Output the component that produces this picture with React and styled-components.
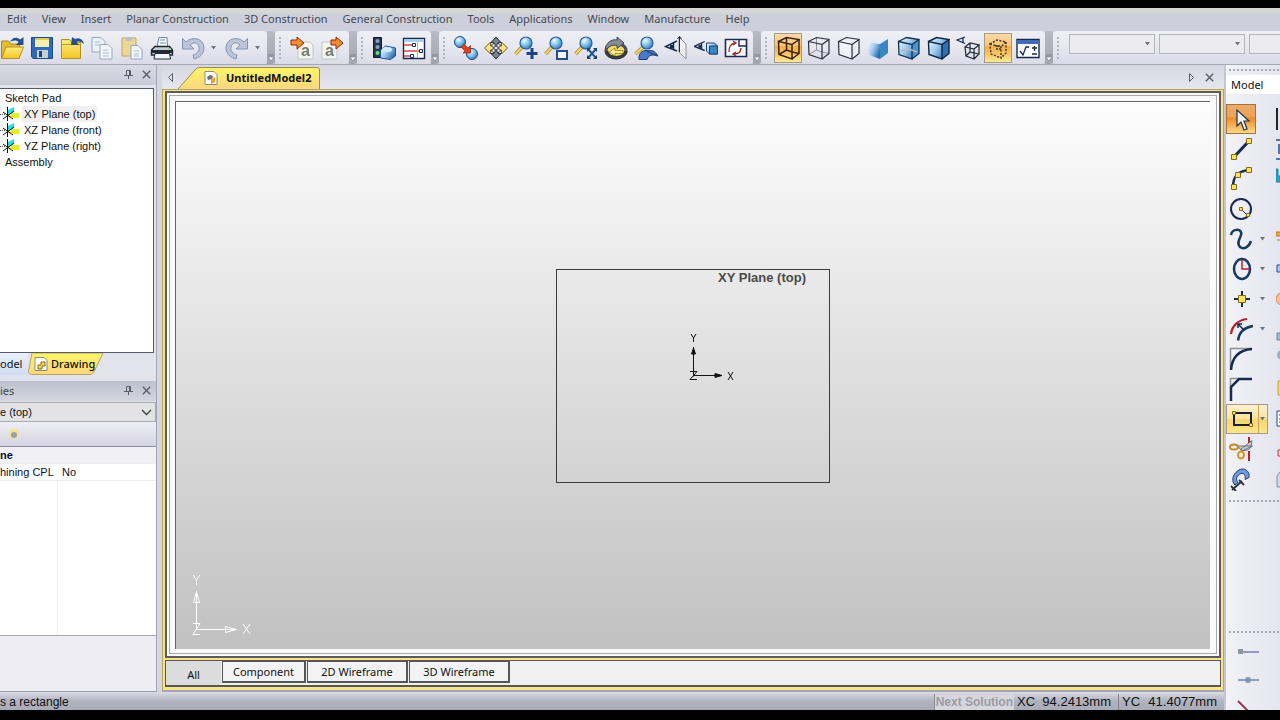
import React from "react";
import styled, { createGlobalStyle } from "styled-components";

const ui = `"Noto Sans", "Open Sans", sans-serif`;
const classic = `"Liberation Sans", Arial, sans-serif`;

const GlobalStyle = createGlobalStyle`
  * {
    box-sizing: border-box;
  }
  body {
    margin: 0;
    background: #000;
    color: #111;
    font: 11px/16px ${ui};
  }
  button,
  select {
    margin: 0;
    padding: 0;
    border: 0;
    background: none;
    color: inherit;
    font: inherit;
  }
  svg {
    display: block;
    flex: none;
  }
`;

const Screen = styled.div`
  display: flex;
  flex-direction: column;
  height: 100vh;
  padding: 8px 0 10px;
  overflow: hidden;
`;

const MenuBar = styled.nav`
  display: flex;
  flex: none;
  gap: 15px;
  height: 23px;
  padding: 0 7px 2px;
  align-items: center;
  background: linear-gradient(#d6d6d8 0 5px, #cdd0da 6px);
`;

const MenuItem = styled.button`
  color: #454850;
  white-space: nowrap;
`;

const ToolBars = styled.div`
  display: flex;
  flex: none;
  height: 34px;
  margin-left: -3px;
  background: #cdd0da;
  border-bottom: 1px solid #a6a8b2;
`;

const BarBody = styled.div`
  display: flex;
  flex: ${({ $fill }) => ($fill ? 1 : "none")};
  align-items: center;
  padding-right: 2px;
  background: linear-gradient(#eff0f6, #e6e7ef 50%, #dadbe6);
  border-radius: 4px;
`;

const BarEnd = styled.button`
  display: flex;
  width: 10px;
  align-items: flex-end;
  justify-content: center;
  padding-bottom: 2px;
  background: linear-gradient(#b9bbc4, #a2a4ae);
  border-radius: 0 3px 3px 0;
`;

const Grip = styled.span`
  width: 2px;
  height: 22px;
  margin: 0 6px 0 4px;
  background: repeating-linear-gradient(#b0b2bd 0 2px, transparent 2px 4px);
`;

const ToolButton = styled.button`
  display: flex;
  width: ${({ $split }) => ($split ? 42 : 28)}px;
  height: 30px;
  margin: 0 1px;
  align-items: center;
  justify-content: ${({ $split }) => ($split ? "space-between" : "center")};
  padding: 0 ${({ $split }) => ($split ? 2 : 0)}px;
  border: 1px solid ${({ $active }) => ($active ? "#a89a80" : "transparent")};
  background: ${({ $active }) =>
    $active ? "linear-gradient(#fad9ac, #f8c577 40%, #f5ae4c 46%, #f8c463 70%, #fbea98)" : "none"};
`;

const Combo = styled.label`
  display: flex;
  flex: none;
  width: 86px;
  height: 20px;
  margin: 0 0 7px 4px;
  align-items: center;
  border: 1px solid #b4b5bb;
  background: #ececf0;

  select {
    flex: 1;
    min-width: 0;
    appearance: none;
  }
  svg {
    margin-right: 3px;
  }
`;

const Body = styled.div`
  display: flex;
  flex: 1;
  min-height: 0;
  background: #d5d6e0;
`;

const Center = styled.div`
  display: flex;
  flex: 1;
  min-width: 0;
  flex-direction: column;
`;

const Work = styled.div`
  display: flex;
  flex: 1;
  min-height: 0;
`;

const SidePanel = styled.aside`
  display: flex;
  flex: none;
  width: 157px;
  flex-direction: column;
  border-right: 1px solid #a4a6b4;
  border-bottom: 1px solid #9c9dab;
  background: #e3e3ec;
`;

const PanelTitle = styled.header`
  display: flex;
  flex: none;
  height: 20px;
  gap: 9px;
  align-items: center;
  padding: 0 5px 1px 0;
  color: #454850;
  background: ${({ $shaded }) =>
    $shaded ? "linear-gradient(#bcc1cb, #d3d6de)" : "linear-gradient(#d9dbe3, #c9ccd6)"};

  span {
    flex: 1;
  }
  button {
    color: #5b5e68;
  }
`;

const TreeBox = styled.ul`
  flex: none;
  height: 265px;
  margin: 3px 2px 0 0;
  padding: 1px 0 0;
  list-style: none;
  background: #fff;
  border: solid #555a68;
  border-width: 1px 1px 1px 0;
  font: 11px/16px ${classic};
`;

const TreeItem = styled.li`
  display: flex;
  height: 16px;
  gap: 2px;
  padding-left: ${({ $leaf }) => ($leaf ? 0 : 5)}px;

  span {
    padding: 0 2px;
    margin-left: ${({ $leaf }) => ($leaf ? 0 : -2)}px;
    background: ${({ $selected }) => ($selected ? "#f0f0f0" : "none")};
  }
`;

const PanelTabs = styled.div`
  display: flex;
  height: 28px;
  background: linear-gradient(90deg, #dfe2ee, #e3e3ec 60%);
`;

const ModelTab = styled.button`
  align-self: flex-start;
  width: 28px;
  height: 22px;
  text-align: left;
  background: linear-gradient(#eaf1fc, #cfdcf2);
`;

const SlantTab = styled.button`
  display: grid;
  height: 22px;
  align-items: center;

  > * {
    grid-area: 1 / 1;
  }
`;

const TabLabel = styled.span`
  display: flex;
  gap: ${({ $bold }) => ($bold ? 8 : 3)}px;
  align-items: center;
  padding-left: ${({ $bold }) => ($bold ? 26 : 6)}px;
  font-weight: ${({ $bold }) => ($bold ? 700 : 500)};
  z-index: 1;
`;

const ObjectPicker = styled.label`
  display: flex;
  height: 20px;
  margin-top: 1px;
  align-items: center;
  border: solid #a9a9b0;
  border-width: 1px 1px 1px 0;
  background: #e3e3e6;
  font: 11px/16px ${classic};

  select {
    flex: 1;
    appearance: none;
  }
  svg {
    margin-right: 3px;
  }
`;

const PropTools = styled.div`
  display: flex;
  flex: none;
  height: 24px;
  padding-left: 8px;
  align-items: center;
  background: linear-gradient(#eeeef5, #d5d4e0);
`;

const PropTable = styled.table`
  width: 100%;
  border-collapse: collapse;
  border-top: 1px solid #8d8f9c;
  background: #fff;
  color: #0e1033;
  font: 11px/16px ${classic};

  th,
  td {
    height: 17px;
    padding: 0;
    text-align: left;
    font-weight: 400;
    border-bottom: 1px solid #ececf0;
  }
  th[scope="rowgroup"] {
    font-weight: 700;
    background: #efeff4;
  }
  td {
    width: 95px;
    padding-left: 1px;
  }
`;

const PropSpace = styled.div`
  flex: 1;
  background: linear-gradient(90deg, #fff 57px, #f2f2f2 57px 58px, #fff 58px);
`;

const PropHelp = styled.div`
  flex: none;
  height: 56px;
  border-top: 1px solid #a9a6b8;
  background: #ededf3;
`;

const DocArea = styled.main`
  display: flex;
  flex: 1;
  min-width: 0;
  margin-left: 5px;
  flex-direction: column;
`;

const DocTabs = styled.div`
  display: flex;
  flex: none;
  height: 24px;
  padding: 2px 6px 0 4px;
  color: #5b5e68;
  background: linear-gradient(#d6d7e0, #e6e6ee);
`;

const TabSpace = styled.span`
  flex: 1;
`;

const NavButton = styled.button`
  display: flex;
  width: 18px;
  height: 20px;
  align-items: center;
  justify-content: ${({ $left }) => ($left ? "flex-start" : "center")};
  color: #5b5e68;
`;

const DocTab = styled(SlantTab)`
  margin-left: -6px;
  color: #111;
`;

const YellowFrame = styled.section`
  display: flex;
  flex: 1;
  min-height: 0;
  flex-direction: column;
  padding: 1px 2px 3px;
  border: 1px solid #b5a565;
  border-width: 1px 1px 2px;
  border-bottom-color: #a6a4ae;
  background: #f8e488;
`;

const ViewFrame = styled.div`
  display: flex;
  flex: 1;
  min-height: 0;
  padding: 2px;
  border: 2px solid #5c5c60;
  background: #fafafa;
`;

const ViewInset = styled.div`
  display: flex;
  flex: 1;
  padding: 5px 6px 4px 5px;
  border: 1px solid #a9a9ac;
  background: #fafafa;
`;

const Viewport = styled.div`
  position: relative;
  display: grid;
  flex: 1;
  place-items: center;
  border: 1px solid #66666a;
  border-width: 1px 0 0 1px;
  background: linear-gradient(#fdfdfd, #dedede 50%, #c1c1c1);
`;

const Plane = styled.div`
  display: grid;
  width: 274px;
  height: 214px;
  border: 1px solid #3c3c3c;

  > * {
    grid-area: 1 / 1;
  }
`;

const PlaneLabel = styled.span`
  justify-self: end;
  padding-right: 23px;
  color: #4a4a4a;
  font: 700 13px/16px ${classic};
`;

// the origin of the axes sits in the middle of the plane
const PlaneAxes = styled.div`
  display: grid;
  padding: 0 0 37px 41px;
  place-items: center;
`;

const CornerAxes = styled.div`
  position: absolute;
  left: 15px;
  bottom: 9px;
`;

const SheetTabs = styled.div`
  display: flex;
  flex: none;
  height: 27px;
  margin-top: 2px;
  border: solid #55555a;
  border-width: 1px 1px 2px;
  background: #f0f0f0;
`;

const SheetTab = styled.button`
  width: ${({ $width }) => $width}px;
  height: ${({ $active }) => ($active ? 24 : 22)}px;
  margin-right: 1px;
  padding-top: ${({ $active }) => ($active ? 3 : 0)}px;
  border: solid #55555a;
  border-width: ${({ $active }) => ($active ? "0" : "1px 2px 2px 1px")};
  background: ${({ $active }) => ($active ? "#dcdcdc" : "#f3f3f3")};
`;

const StatusBar = styled.footer`
  display: flex;
  flex: none;
  height: 18px;
  align-items: center;
  padding-top: 2px;
  background: linear-gradient(#dcdce4, #b0b2be 50%, #a9acb8);
  font: 12px/16px ${classic};
`;

const Hint = styled.span`
  flex: 1;
`;

const NextSolution = styled.button`
  height: 16px;
  padding: 0 1px;
  border-left: 1px solid #888a96;
  background: #d6d6dc;
  color: #9b9ca4;
  font-weight: 700;
`;

const Coord = styled.output`
  display: flex;
  width: ${({ $width }) => $width}px;
  justify-content: space-between;
  padding: 0 7px 0 3px;
  font-size: 13px;
  border-right: ${({ $last }) => ($last ? "0" : "1px solid #80828e")};
`;

const Palette = styled.aside`
  display: flex;
  flex: none;
  width: 56px;
  flex-direction: column;
  overflow: hidden;
  border-left: 2px solid #c5c6d0;
  background: linear-gradient(90deg, #f1f1f7, #e5e5ef);
`;

const Dots = styled.div`
  flex: none;
  height: 2px;
  margin: ${({ $gap }) => $gap} 0 0 3px;
  background: repeating-linear-gradient(90deg, #a6a8b2 0 2px, transparent 2px 4px);
`;

const PaletteTitle = styled.h2`
  flex: none;
  height: 19px;
  margin: 4px 0 10px;
  padding: 2px 5px 1px;
  background: #fff;
  font: inherit;
`;

const PaletteRow = styled.div`
  display: grid;
  grid-template-columns: 42px 1fr;
  flex: none;
  height: 30px;
`;

const PaletteButton = styled.button`
  display: flex;
  width: ${({ $active }) => ($active ? 30 : 42)}px;
  height: 30px;
  align-items: center;
  gap: 6px;
  padding-left: 2px;
  border: 1px solid ${({ $active, $open }) => ($active ? "#a8713c" : $open ? "#a89a80" : "transparent")};
  background: ${({ $active, $open }) =>
    $active
      ? "linear-gradient(#e8ab6c, #eda458 40%, #ef8d2c 48%, #f8b458 75%, #fbd98a)"
      : $open
      ? "linear-gradient(90deg, transparent 31px, #c9a455 31px 32px, transparent 32px), linear-gradient(#fbf0d2, #fbe3a0 48%, #f8d66e 52%, #fbe68e)"
      : "none"};
`;

const PaletteClip = styled.span`
  padding: 3px 0 0 8px;
`;

const PaletteFill = styled.div`
  flex: 1;
`;

const SnapList = styled.div`
  display: flex;
  flex: none;
  flex-direction: column;
  height: 77px;
  gap: 4px;
  padding: 7px 0 0 9px;
  overflow: hidden;
`;

const navy = "#182a50";

const Icon = ({ children, size = 24, ...rest }) => (
  <svg width={size} height={size} viewBox={`0 0 ${size} ${size}`} fill="none" aria-hidden="true" {...rest}>
    {children}
  </svg>
);

const Caret = ({ color = "#70737d" }) => (
  <svg width="7" height="4" viewBox="0 0 7 4" aria-hidden="true">
    <path d="M1 0h5L3.500 3.500z" fill={color} />
  </svg>
);

const EndMark = () => (
  <svg width="8" height="8" viewBox="0 0 8 8" aria-hidden="true">
    <path d="M1 1h6M1 3h6L4 7z" fill="#fff" stroke="#666874" strokeWidth=".6" />
  </svg>
);

const Pin = () => (
  <Icon size={9} stroke="#5b5e68">
    <path d="M2.500 5V.5h4V5M5.500 1v4M0 5.500h9M4.500 6v3" />
  </Icon>
);

const Cross = () => (
  <Icon size={9} stroke="#5b5e68" strokeWidth="1.400">
    <path d="m.8.800 7.400 7.400m0-7.400L.8 8.200" />
  </Icon>
);

const Chevron = () => (
  <svg width="11" height="7" viewBox="0 0 11 7" fill="none" stroke="#3c3e45" strokeWidth="1.300">
    <path d="m1 1 4.500 4.500L10 1" />
  </svg>
);

const Lens = ({ x = 14, y = 8, r = 6 }) => (
  <>
    <path d={`M${x - 4} ${y + 4}L1.500 ${y + 11}`} stroke="#a8802c" strokeWidth="3.500" />
    <path d={`M${x - 4} ${y + 4}L1.500 ${y + 11}`} stroke="#f5d865" strokeWidth="2" />
    <circle cx={x} cy={y} r={r} fill="url(#ball)" stroke="#286094" strokeWidth="1.200" />
  </>
);

const cubeEdges = "M2.500 5.500 16 8.500V23L3 18.500zM2.500 5.500l8-4 12.500 2-7 5M23 3.500v14L16 23";
const cubeHidden = "M10.500 1.500V14L16 16l7 1.500M10.500 14 3 18.500";
const cubeSolid = "M2.500 5.500l8-4 12.500 2v14L16 23 3 18.500z";

const Pages = () => (
  <>
    <path d="M2 1.500h9l4 4V16H2z" fill="#edf1f6" stroke="#99a7bd" />
    <path d="M10 8.500h8l4 4V23H10z" fill="#f3f5fa" stroke="#99a7bd" />
    <path d="M5 6h5M5 9h5M13 14h5M13 17h6M13 20h6" stroke="#a8bcd8" />
  </>
);

const UndoShape = () => (
  <path
    d="M1.500 2.500 5 6C11 0 22 2 23 11c.5 7-5 11-10 12l-1-4c4-1 7-4 6-8-1-5-6-5-9-2l4 4H1.500z"
    fill="#bcc5d8"
    stroke="#8494b4"
  />
);

const Sheet = ({ x }) => (
  <>
    <path d={`M${x} 6h12l3 3v14h-15z`} fill="#f4f4f0" stroke="#c4c4c4" />
    <text x={x + 3} y="20" fill="#75806c" fontSize="16" fontWeight="700" fontFamily="Liberation Sans">
      a
    </text>
  </>
);

const Eye = () => (
  <>
    <path d="M13 5 1.500 10.500 13 15M9.500 7v7" stroke={navy} strokeWidth="1.500" />
    <path d="M6 9h3v3H6z" fill={navy} />
  </>
);

const icons = {
  open: (
    <>
      <path d="M1.500 5h7l2 3h9v14h-18z" fill="#e8bd2c" stroke="#a8851e" />
      <path d="M1.500 22.500 6 11h17.500L19 22.500z" fill="url(#gold)" stroke="#b5901c" />
      <path d="M10 7c1-5 6-7 10-3.500L23.500 1v8H16l2.500-3C16 4 12 4 10 7z" fill="#25508e" />
    </>
  ),
  save: (
    <>
      <path d="M1.500 1.500h21v21H3l-1.500-2z" fill="#2d6ab8" stroke="#1c4b8c" />
      <path d="M5 2h14v9H5z" fill="#f5efb0" />
      <path d="M5 2h14v2H5z" fill="#e0ca5e" />
      <path d="M7 14h11v8H7z" fill="#c6ced8" />
      <path d="M9 15h3v6H9z" fill="#27406c" />
    </>
  ),
  import: (
    <>
      <path d="M1.500 3.500h8l2 3h9v16h-19z" fill="url(#gold)" stroke="#b5901c" />
      <path d="M2 8.500h18" stroke="#c69d1e" />
      <path d="M24 8c-1-5-5-7-9-5l-3-2-1 8h8l-2.500-3c3-1 5 0 7.500 2z" fill="#25508e" />
    </>
  ),
  copy: <Pages />,
  paste: (
    <>
      <path d="M2 2h14v18H2z" fill="#ecd797" stroke="#c2a55e" />
      <path d="M6 1h6v4H6z" fill="#b9bfca" />
      <path d="M11 9.500h7l4 4V23H11z" fill="#f2f5fa" stroke="#92a5c4" />
      <path d="M14 15h5M14 18h5M14 20h5" stroke="#a8bcd8" />
    </>
  ),
  print: (
    <>
      <path d="M7 11 9 1.500h8L17.500 11z" fill="#f8fafc" stroke="#6b85ac" />
      <path d="M10 4h5M10 7h6" stroke="#7b8fae" />
      <path d="M1.500 14 5 10.500h14.500l3 3.500v5h-21z" fill="#c6ced8" stroke="#1c2733" strokeWidth="1.400" />
      <path d="M2 14h20v3H2z" fill="#202a33" />
      <path d="M5 17.500h14.500l1 5.500H4z" fill="#f3f6f8" stroke="#202a33" />
      <path d="M18 12h3v1h-3z" fill="#6dda79" />
    </>
  ),
  undo: <UndoShape />,
  redo: (
    <g transform="matrix(-1 0 0 1 24 0)">
      <UndoShape />
    </g>
  ),
  readIn: (
    <>
      <Sheet x={8} />
      <path d="M1 4h6V1l7 6-7 6v-4H1z" fill="#f48a32" stroke="#8c2c10" />
    </>
  ),
  readOut: (
    <>
      <Sheet x={2} />
      <path d="M11 4h5V1l7 6-7 6v-4h-5z" fill="#f48a32" stroke="#8c2c10" />
    </>
  ),
  signal: (
    <>
      <path d="M1.500 1.500h8v20h-8z" fill="#26384c" stroke="#101a28" />
      <circle cx="5.500" cy="5" r="2" fill="#8aa3b4" />
      <circle cx="5.500" cy="11" r="2" fill="#8aa3b4" />
      <circle cx="5.500" cy="17" r="2" fill="#6fe06c" />
      <path d="m8.500 14 5-4 10 2v8l-5 3.500-10-1.500z" fill="url(#blue)" stroke="#1f5590" />
      <ellipse cx="15" cy="13.500" rx="5" ry="2.500" fill="#d3ebfa" />
    </>
  ),
  sliders: (
    <>
      <path d="M1.500 2.500h21v20h-21z" fill="#fff" stroke={navy} strokeWidth="1.400" />
      <path d="M2 3h20v3H2z" fill="#a9cdec" />
      <path d="M2 9h9M2 15h17M2 20h8" stroke="#d04a4a" strokeWidth="1.500" />
      <path d="M15.500 6v16" stroke="#8fb8dc" />
      <path d="M10.500 7.500h3v3h-3zM17.500 13.500h3v3h-3zM8.500 18.500h3v3h-3z" fill="#fff" stroke={navy} />
    </>
  ),
  balls: (
    <>
      <circle cx="6" cy="6" r="5.500" fill="url(#ball)" stroke="#1d4a80" />
      <circle cx="18" cy="18" r="5.500" fill="url(#ball)" stroke="#1d4a80" />
      <path d="m7 11 3-3 4 4 2.500-2.500V17H9l2-2z" fill="#e6401f" stroke="#8c2412" strokeWidth=".7" />
    </>
  ),
  pan: (
    <>
      <path d="m12 1 5 5.500h-3V10h-4V6.500H7zM12 23l5-5.500h-3V14h-4v3.500H7z" fill="#7b8391" stroke="#2b3342" />
      <path d="m.5 12 6-6v4H10v4H6.500v4zM23.500 12l-6-6v4H14v4h3.500v4z" fill="#f9e67c" stroke="#6d5a1c" />
      <path d="M8 8h3v3H8zM13 8h3v3h-3zM8 13h3v3H8zM13 13h3v3h-3z" fill="#fff" stroke="#2b3342" strokeWidth=".8" />
    </>
  ),
  zoomIn: (
    <>
      <Lens x={12} y={7} />
      <path d="M18 12v11M12.500 17.500h11" stroke="#1f3f86" strokeWidth="3" />
    </>
  ),
  zoomBox: (
    <>
      <Lens x={12} y={7} />
      <path d="M13 15h10v8H13z" fill="#f4f7fc" stroke="#264a8c" strokeWidth="2" />
    </>
  ),
  zoomAll: (
    <>
      <Lens x={12} y={7} />
      <path d="m14 13 8 9m0-9-8 9" stroke="#27568f" strokeWidth="2" />
      <path d="M13 12h4l-4 4zM23 12h-4l4 4zM13 23h4l-4-4zM23 23h-4l4-4z" fill="#1d4272" />
    </>
  ),
  rotate: (
    <>
      <ellipse cx="12" cy="14.500" rx="10" ry="7" fill="#f4dc62" stroke="#4a4f58" strokeWidth="3" />
      <path d="M2.500 15c1 9 18 9 19.500 0" stroke="#33373e" strokeWidth="3.500" />
      <path d="M1.500 11C4 5 9 3 13 4V1l7 6-7 5.500v-3c-4-1-8 0-10.500 4z" fill="#868b9a" stroke="#434853" />
      <path d="m5 16 6-4v2.500h8v3h-8V20z" fill="#fbeb90" stroke="#9c7c1c" strokeWidth=".8" />
    </>
  ),
  zoomBack: (
    <>
      <Lens x={13} y={7} />
      <path d="M5 23.500C4 15 12 12 18 16.500l-1-1L23.500 20C18 18 15 19 13 23.500z" fill="#4a78c2" stroke="#1d3d78" />
      <path d="M13 15.500c4-2 8-1 10.500 4L17 17z" fill="#4a78c2" stroke="#1d3d78" />
    </>
  ),
  viewPlane: (
    <>
      <Eye />
      <path d="M15 1v15l7 7V8z" fill="#f1f2f7" stroke="#8b929e" />
      <path d="M15.500 1v15" stroke={navy} />
      <path d="m13.500 3 2-2.500 2 2.500" stroke={navy} />
    </>
  ),
  viewFace: (
    <>
      <g transform="translate(-1 1) scale(.9)">
        <Eye />
      </g>
      <path d="M12.500 7h8l3 3v8h-8l-3-3z" fill="url(#blue)" stroke="#1c4474" />
      <path d="M15.500 10h8v8h-8z" fill="#3b82c0" stroke="#1c4474" />
    </>
  ),
  swap: (
    <>
      <path d="M1.500 3.500h21v17h-21z" fill="#fff" stroke={navy} strokeWidth="1.600" />
      <path d="M15 4v6h7" stroke={navy} strokeWidth="1.400" />
      <path d="M5 16c0-5 1-8 6-9m-2-2 3 2-3 2M17 12c0 4-2 6-7 6m2-2-3 2 3 2" stroke="#a02630" strokeWidth="1.400" />
    </>
  ),
  wire: <path d={cubeEdges + cubeHidden} stroke="#3b2410" strokeWidth="1.500" />,
  hiddenGrey: (
    <>
      <path d={cubeHidden} stroke="#8d919b" />
      <path d={cubeEdges} stroke="#2b303c" strokeWidth="1.200" />
    </>
  ),
  hiddenOff: <path d={cubeEdges} stroke="#2b303c" strokeWidth="1.200" fill="#f1f2f7" />,
  shaded: (
    <>
      <path d="M2 6 14 8v15L3 19z" fill="url(#blue)" />
      <path d="m2 6 7-4 13 1-8 5z" fill="#e3eef8" />
      <path d="M22 3v14l-8 6V8z" fill="#3787c4" />
    </>
  ),
  shadedGrey: (
    <>
      <path d={cubeSolid} fill="url(#blue)" />
      <path d="M23 3.500v14L16 23V8.500z" fill="#4a93d0" />
      <path d={cubeEdges} stroke="#14314e" strokeWidth="1.300" />
      <path d="M5 15c5-3 9-2 16 1" stroke="#b4b9c2" strokeWidth="1.500" />
    </>
  ),
  shadedEdges: (
    <>
      <path d={cubeSolid} fill="url(#blue)" />
      <path d="M23 3.500v14L16 23V8.500z" fill="#2f6fb2" />
      <path d={cubeEdges} stroke="#0e2440" strokeWidth="1.400" />
    </>
  ),
  perspective: (
    <>
      <path d="M9 1 1 4l8 3.500M7 2v5" stroke={navy} strokeWidth="1.300" />
      <path d="m9 11 9 2v10l-8-3zM9 11l5-4 9 2-5 4M23 9v9l-5 5M14 7v9l9 2M14 16l-4 4" stroke="#222936" strokeWidth="1.200" />
    </>
  ),
  dashed: (
    <>
      <path d="m4 8 11 3v11L5 18zM4 8l7-4 9 2-5 5M20 6v11l-5 5" stroke="#4b3a18" strokeWidth="1.500" strokeDasharray="2 1.500" />
      <path d="M9 10h6M10 13h5" stroke="#333b40" strokeWidth="1.500" strokeDasharray="2 1" />
    </>
  ),
  options: (
    <>
      <path d="M1 3.500h22v18H1z" fill="#fff" stroke={navy} strokeWidth="1.400" />
      <path d="M2 4h20v4H2z" fill="#3e6db5" />
      <path d="m4 15 3 4 3-8h3M16 12h5M18.500 10v5M16 18h5" stroke={navy} strokeWidth="1.300" />
    </>
  ),
};

const node = { fill: "#f9e55e", stroke: "#84691b" };

const palette = [
  {
    name: "Select",
    active: true,
    icon: <path d="M8 3v16l4-4 3 8 3-1-3-8h5z" fill="#e9f5fb" stroke="#223140" strokeWidth="1.200" />,
    clip: <path d="M1 1v22" stroke="#222" strokeWidth="2" />,
  },
  {
    name: "Line",
    icon: (
      <>
        <path d="M5 20 20 4" stroke={navy} strokeWidth="3" />
        <path d="M2.500 17.500h5v5h-5zM17.500 1.500h5v5h-5z" {...node} />
      </>
    ),
    clip: <path d="M0 3h5M3 7v10M0 22h5" stroke="#27508a" strokeWidth="1.500" />,
  },
  {
    name: "Arc",
    icon: (
      <>
        <path d="M4 20c0-11 5-16 16-17" stroke={navy} strokeWidth="2.500" />
        <path d="M2.500 17.500h5v5h-5zM6.500 5.500h5v5h-5zM17.500.5h5v5h-5z" {...node} />
      </>
    ),
    clip: <path d="M0 2v13h5V9H2V2z" fill="#22a4c8" stroke="#2a7fae" />,
  },
  {
    name: "Circle",
    icon: (
      <>
        <circle cx="12" cy="12" r="10" stroke={navy} strokeWidth="2" />
        <path d="m12 12 7 7" stroke={navy} />
        <path d="M10.500 10.500h3v3h-3zM17.500 16.500h3v3h-3z" {...node} />
      </>
    ),
  },
  {
    name: "Curve",
    menu: true,
    icon: <path d="M2 8c1-7 12-7 10 0-1 4-5 8-1 12 4 3 9 0 11-6" stroke="#173b5c" strokeWidth="2.500" />,
    clip: <path d="M0 5h5v4H0zM1 13h4" fill="#e6a94a" stroke="#c07b22" />,
  },
  {
    name: "Ellipse",
    menu: true,
    icon: (
      <>
        <ellipse cx="13" cy="12" rx="8" ry="10" stroke="#173b5c" strokeWidth="2.500" />
        <path d="M13 3v9h7" stroke="#bb2430" strokeWidth="1.500" />
      </>
    ),
    clip: <path d="M1 8h6v7H1z" fill="#a9c8f0" stroke="#2a4f9a" />,
  },
  {
    name: "Point",
    menu: true,
    icon: (
      <>
        <path d="M13 4v16M5 12h16" stroke={navy} strokeWidth="2" />
        <path d="M9.500 8.500h7v7h-7z" {...node} />
      </>
    ),
    clip: <circle cx="6" cy="12" r="6" fill="#f5bf9c" stroke="#d28254" />,
  },
  {
    name: "Offset",
    menu: true,
    icon: (
      <>
        <path d="M2 17C3 9 9 3 18 2" stroke="#b5222d" strokeWidth="2.200" />
        <path d="M9 23.500c1-8 6-13 15-14.500" stroke="#173b5c" strokeWidth="2.500" />
        <path d="m15 13-6-6m0 4V7h4" stroke={navy} strokeWidth="1.500" />
      </>
    ),
    clip: <path d="M1 16h5v7H1z" fill="#a4b5cf" stroke="#7285a7" />,
  },
  {
    name: "Fillet",
    icon: (
      <>
        <path d="M1.500 22V1.500H23" stroke="#8a9096" strokeWidth="1.500" />
        <path d="M2 23C3 10 10 3 23 2" stroke={navy} strokeWidth="2.500" />
      </>
    ),
    clip: <circle cx="6" cy="8" r="5" fill="#9cadc8" />,
  },
  {
    name: "Chamfer",
    icon: (
      <>
        <path d="M1.500 10V1.500H10" stroke="#8a9096" strokeWidth="1.500" />
        <path d="M2 24V10l8-8h13" stroke={navy} strokeWidth="2.500" />
      </>
    ),
    clip: <path d="M2 4h6v14H2z" fill="#f4d964" stroke="#cba63a" />,
  },
  {
    name: "Rectangle",
    menu: true,
    open: true,
    icon: (
      <>
        <path d="M5 6h17v12H5z" stroke="#1a1f2a" strokeWidth="2" />
        <path d="M3.500 4.500h3v3h-3zM20.500 16.500h3v3h-3z" {...node} />
      </>
    ),
    clip: <path d="M1 4h6v15H1zM3 8h4M3 12h4M3 15h4" fill="#fff" stroke="#25477c" />,
  },
  {
    name: "Trim",
    icon: (
      <>
        <path d="M20 0v6M20 14v10" stroke="#b8202b" strokeWidth="2" />
        <path d="m12 12 11-8.500-1 6-9 4.500zM9 9l14.500 0-5 4-6 1z" fill="#c6cad4" stroke="#6f7583" />
        <ellipse cx="5" cy="10" rx="4" ry="2.500" stroke="#c38a20" strokeWidth="2" />
        <ellipse cx="12" cy="18" rx="3" ry="3.500" stroke="#d99526" strokeWidth="2" />
      </>
    ),
    clip: <path d="M2 13h5v6H2z" stroke="#c3322c" />,
  },
  {
    name: "Clamp",
    icon: (
      <>
        <path
          d="M6 18C1 13 5 5 11 2.500c5-2 10 2 9 8l-4 2c1-4-1-7-4-6-4 1.500-6 6-3 9z"
          fill="#6f9add"
          stroke="#1d3d78"
        />
        <path d="m3 23 10-9M2 19l5 5M10 13l5 5" stroke="#2b3342" strokeWidth="1.800" />
      </>
    ),
    clip: <path d="M1 20V9l3-4h4v15z" fill="#cfd9ec" stroke="#8693ae" />,
  },
];

const toolGroups = [
  { tools: ["open", "save", "import", "copy", "paste", "print", "undo", "redo"], split: ["undo", "redo"] },
  { tools: ["readIn", "readOut"] },
  { tools: ["signal", "sliders"] },
  {
    tools: ["balls", "pan", "zoomIn", "zoomBox", "zoomAll", "rotate", "zoomBack", "viewPlane", "viewFace", "swap"],
  },
  {
    tools: ["wire", "hiddenGrey", "hiddenOff", "shaded", "shadedGrey", "shadedEdges", "perspective", "dashed", "options"],
    active: ["wire", "dashed"],
  },
];

const menus = [
  "Edit",
  "View",
  "Insert",
  "Planar Construction",
  "3D Construction",
  "General Construction",
  "Tools",
  "Applications",
  "Window",
  "Manufacture",
  "Help",
];

const tree = [
  { label: "Sketch Pad" },
  { label: "XY Plane (top)", leaf: true, selected: true },
  { label: "XZ Plane (front)", leaf: true },
  { label: "YZ Plane (right)", leaf: true },
  { label: "Assembly" },
];

const sheets = [
  { label: "All", width: 55, active: true },
  { label: "Component", width: 84 },
  { label: "2D Wireframe", width: 101 },
  { label: "3D Wireframe", width: 101 },
];

const Gradients = () => (
  <svg width="0" height="0" aria-hidden="true">
    <defs>
      <radialGradient id="ball" cx=".35" cy=".3" r=".8">
        <stop offset="0" stopColor="#f2fbff" />
        <stop offset=".5" stopColor="#7fc0ea" />
        <stop offset="1" stopColor="#2670b0" />
      </radialGradient>
      <linearGradient id="blue" x2="1" y2=".6">
        <stop offset="0" stopColor="#f0f8fd" />
        <stop offset=".5" stopColor="#a0cbee" />
        <stop offset="1" stopColor="#2b6cae" />
      </linearGradient>
      <linearGradient id="gold" x2="0" y2="1">
        <stop offset="0" stopColor="#fff07e" />
        <stop offset="1" stopColor="#f3c522" />
      </linearGradient>
      <linearGradient id="tab" x2="0" y2="1">
        <stop offset="0" stopColor="#fdf568" />
        <stop offset="1" stopColor="#fad77e" />
      </linearGradient>
    </defs>
  </svg>
);

const PlaneIcon = () => (
  <svg width="20" height="16" viewBox="0 0 20 16" fill="none" aria-hidden="true">
    <path d="M8 4l6-3v5l-6 4z" fill="#1fe0e6" />
    <path d="m9 10 4-3h6v5h-6z" fill="#e6f01c" />
    <path d="M7.500 1v14M3 6l10 7M3 13l11-8" stroke="#111" />
    <path d="M0 8.500h6" stroke="#555" strokeDasharray="1 1" />
  </svg>
);

const TabIcon = ({ drawing }) => (
  <Icon size={14}>
    <path d="M1 .5h9l3 3v10H1z" fill="#fff" stroke="#8b8b80" />
    {drawing ? (
      <path d="M4 12V8h3V5h4v4H8v3z" stroke="#8a6d12" fill="#f5d75c" />
    ) : (
      <>
        <path d="M3 6l3-2 3 1-1 3-4 1z" fill="#6d6f78" />
        <path d="m7 8 4-2v5l-4 2z" fill="#f0a222" />
      </>
    )}
  </Icon>
);

const Axes = ({ color, small }) => (
  <svg width={small ? 52 : 66} height={small ? 50 : 68} fill="none" stroke={color} aria-label="axes">
    {small ? (
      <>
        <path d="M5.500 44.500V15M5.500 43.500H34" />
        <path d="m3.500 22 2-6 2 6zM27 41.500l7 2-7 2z" fill={color} />
        <path d="m3 2 2.500 4L8 2M5.500 6v4M40 40l5 8m0-8-5 8M2 39.500h7l-7 8h7" />
      </>
    ) : (
      <>
        <path d="M5.500 58V20M5.500 57.500H44" />
        <path d="m2.500 30.500 3-11 3 11zM34.500 54.500l11 3-11 3z" />
        <path d="m2 3 3.500 5L9 3M5.500 8v5M52 52l7 10m0-10-7 10M2 51.500h7l-7 11h7" />
      </>
    )}
  </svg>
);

const Toolbar = ({ tools, active = [], split = [], grip }) => (
  <>
    <BarBody>
      {grip && <Grip />}
      {tools.map((name) => (
        <ToolButton
          key={name}
          aria-label={name}
          $active={active.includes(name)}
          $split={split.includes(name)}
        >
          <Icon>{icons[name]}</Icon>
          {split.includes(name) && <Caret />}
        </ToolButton>
      ))}
    </BarBody>
    <BarEnd aria-label="More buttons">
      <EndMark />
    </BarEnd>
  </>
);

const Title = ({ children, shaded }) => (
  <PanelTitle $shaded={shaded}>
    <span>{children}</span>
    <button aria-label="Pin">
      <Pin />
    </button>
    <button aria-label="Close panel">
      <Cross />
    </button>
  </PanelTitle>
);

const LeftPanel = () => (
  <SidePanel>
    <Title />
    <TreeBox>
      {tree.map(({ label, leaf, selected }) => (
        <TreeItem key={label} $leaf={leaf} $selected={selected}>
          {leaf && <PlaneIcon />}
          <span>{label}</span>
        </TreeItem>
      ))}
    </TreeBox>
    <PanelTabs>
      <ModelTab>odel</ModelTab>
      <SlantTab>
        <svg width="76" height="22" viewBox="0 0 76 22">
          <path d="M4 0h71L66 19q-1 2.500-4 2.500H4Q-1 21 1 16z" fill="url(#tab)" stroke="#b9a464" />
        </svg>
        <TabLabel>
          <TabIcon drawing />
          Drawing
        </TabLabel>
      </SlantTab>
    </PanelTabs>
    <Title shaded>ies</Title>
    <ObjectPicker>
      <select aria-label="Object">
        <option>e (top)</option>
      </select>
      <Chevron />
    </ObjectPicker>
    <PropTools>
      <Icon size={12}>
        <circle cx="6" cy="6" r="5" fill="#f4e58c" />
        <circle cx="6" cy="7" r="3" fill="#9b9cb0" />
      </Icon>
    </PropTools>
    <PropTable>
      <tbody>
        <tr>
          <th scope="rowgroup" colSpan="2">
            ne
          </th>
        </tr>
        <tr>
          <th scope="row">hining CPL</th>
          <td>No</td>
        </tr>
      </tbody>
    </PropTable>
    <PropSpace />
    <PropHelp />
  </SidePanel>
);

const Document = () => (
  <DocArea>
    <DocTabs>
      <NavButton $left aria-label="Scroll tabs left">
        <Icon size={9} stroke="#5b5e68">
          <path d="M6.500.5v8l-4-4z" />
        </Icon>
      </NavButton>
      <DocTab>
        <svg width="142" height="22" viewBox="0 0 142 22">
          <path d="M0 22 17 3q2-2.500 5-2.500h117q2.500 0 2.500 2.500v19" fill="url(#tab)" stroke="#a08a52" />
        </svg>
        <TabLabel $bold>
          <TabIcon />
          UntitledModel2
        </TabLabel>
      </DocTab>
      <TabSpace />
      <NavButton aria-label="Scroll tabs right">
        <Icon size={9} stroke="#5b5e68">
          <path d="M2.500.5v8l4-4z" />
        </Icon>
      </NavButton>
      <NavButton aria-label="Close document">
        <Cross />
      </NavButton>
    </DocTabs>
    <YellowFrame>
      <ViewFrame>
        <ViewInset>
          <Viewport>
            <Plane>
              <PlaneLabel>XY Plane (top)</PlaneLabel>
              <PlaneAxes>
                <Axes small color="#111" />
              </PlaneAxes>
            </Plane>
            <CornerAxes>
              <Axes color="#fff" />
            </CornerAxes>
          </Viewport>
        </ViewInset>
      </ViewFrame>
      <SheetTabs>
        {sheets.map(({ label, width, active }) => (
          <SheetTab key={label} $width={width} $active={active}>
            {label}
          </SheetTab>
        ))}
      </SheetTabs>
    </YellowFrame>
  </DocArea>
);

const RightPalette = () => (
  <Palette>
    <Dots $gap="4px" />
    <PaletteTitle>Model</PaletteTitle>
    {palette.map(({ name, icon, clip, menu, active, open }) => (
      <PaletteRow key={name}>
        <PaletteButton aria-label={name} $active={active} $open={open}>
          <Icon>{icon}</Icon>
          {menu && <Caret />}
        </PaletteButton>
        <PaletteClip>
          <Icon>{clip}</Icon>
        </PaletteClip>
      </PaletteRow>
    ))}
    <Dots $gap="6px" />
    <PaletteFill />
    <Dots $gap="0" />
    <SnapList>
      <Icon>
        <path d="M6 12h18" stroke="#8f9cc0" strokeWidth="2" />
        <path d="M3 9h5v5H3z" fill="#8d97a8" />
      </Icon>
      <Icon>
        <path d="M3 12h21" stroke="#8f9cc0" strokeWidth="2" />
        <circle cx="13" cy="12" r="3" fill="#8496b0" />
      </Icon>
      <Icon>
        <path d="m3 5 12 12" stroke="#9a3350" strokeWidth="2" />
      </Icon>
    </SnapList>
  </Palette>
);

const App = () => {
  return (
    <Screen>
      <GlobalStyle />
      <Gradients />
      <MenuBar>
        {menus.map((label) => (
          <MenuItem key={label}>{label}</MenuItem>
        ))}
      </MenuBar>
      <ToolBars>
        {toolGroups.map((group, i) => (
          <Toolbar key={group.tools[0]} grip={i > 0} {...group} />
        ))}
        <BarBody $fill>
          <Grip />
          {["Layer", "Style", "Weight"].map((name) => (
            <Combo key={name}>
              <select aria-label={name} />
              <Caret />
            </Combo>
          ))}
        </BarBody>
      </ToolBars>
      <Body>
        <Center>
          <Work>
            <LeftPanel />
            <Document />
          </Work>
          <StatusBar>
            <Hint>s a rectangle</Hint>
            <NextSolution>Next Solution</NextSolution>
            <Coord $width={105}>
              <span>XC</span>
              <span>94.2413mm</span>
            </Coord>
            <Coord $width={105} $last>
              <span>YC</span>
              <span>41.4077mm</span>
            </Coord>
          </StatusBar>
        </Center>
        <RightPalette />
      </Body>
    </Screen>
  );
};

export default App;
